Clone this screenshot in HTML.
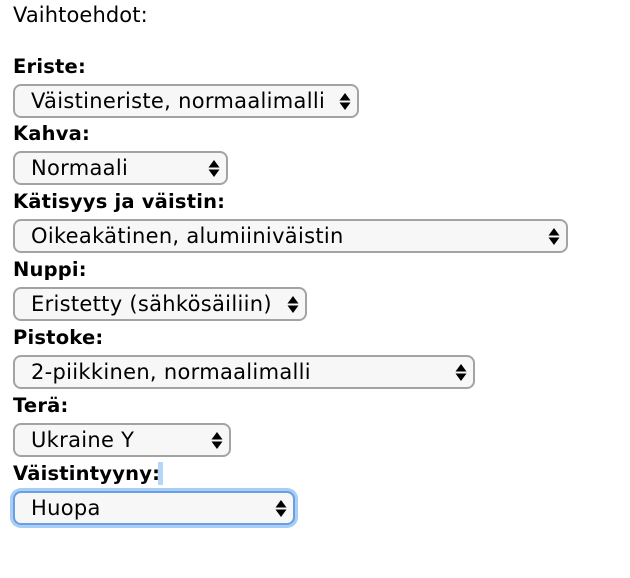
<!DOCTYPE html>
<html><head><meta charset="utf-8"><style>
body{margin:0;background:#fff;width:630px;height:578px;position:relative;font-family:"DejaVu Sans",sans-serif;color:#000;overflow:hidden}
.t{position:absolute;left:13px;font-size:21px;line-height:24px;letter-spacing:0.1px}
.l{position:absolute;left:13px;font-size:19.5px;font-weight:bold;line-height:22px;letter-spacing:0.2px}
.s{position:absolute;left:13px;border:2px solid #a3a3a3;border-radius:8px;background:#f7f7f7;box-sizing:border-box;height:34px;font-size:21px;line-height:30px;padding-left:16px;letter-spacing:0.3px}
.s svg{position:absolute;right:6px;top:6px}
.f{border:2px solid #6a9fe0;box-shadow:0 0 0 3px #a8cdf7}
</style></head><body>
<div class="t" style="top:3px">Vaihtoehdot:</div>
<div class="l" style="top:56px">Eriste:</div>
<div class="s" style="top:84px;width:346px">Väistineriste, normaalimalli<svg width="12" height="19"><path d="M6 1L11.5 8.5H0.5Z M6 18L11.5 10.5H0.5Z"/></svg></div>
<div class="l" style="top:123px">Kahva:</div>
<div class="s" style="top:151px;width:215px">Normaali<svg width="12" height="19"><path d="M6 1L11.5 8.5H0.5Z M6 18L11.5 10.5H0.5Z"/></svg></div>
<div class="l" style="top:191px">Kätisyys ja väistin:</div>
<div class="s" style="top:219px;width:555px">Oikeakätinen, alumiiniväistin<svg width="12" height="19"><path d="M6 1L11.5 8.5H0.5Z M6 18L11.5 10.5H0.5Z"/></svg></div>
<div class="l" style="top:259px">Nuppi:</div>
<div class="s" style="top:287px;width:294px">Eristetty (sähkösäiliin)<svg width="12" height="19"><path d="M6 1L11.5 8.5H0.5Z M6 18L11.5 10.5H0.5Z"/></svg></div>
<div class="l" style="top:327px">Pistoke:</div>
<div class="s" style="top:355px;width:462px">2-piikkinen, normaalimalli<svg width="12" height="19"><path d="M6 1L11.5 8.5H0.5Z M6 18L11.5 10.5H0.5Z"/></svg></div>
<div class="l" style="top:395px">Terä:</div>
<div class="s" style="top:423px;width:218px">Ukraine Y<svg width="12" height="19"><path d="M6 1L11.5 8.5H0.5Z M6 18L11.5 10.5H0.5Z"/></svg></div>
<div class="l" style="top:463px">Väistintyyny:</div>
<div style="position:absolute;left:158px;top:462px;width:5px;height:23px;background:#b5d5fb"></div>
<div class="s f" style="top:491px;width:282px">Huopa<svg width="12" height="19"><path d="M6 1L11.5 8.5H0.5Z M6 18L11.5 10.5H0.5Z"/></svg></div>
</body></html>
